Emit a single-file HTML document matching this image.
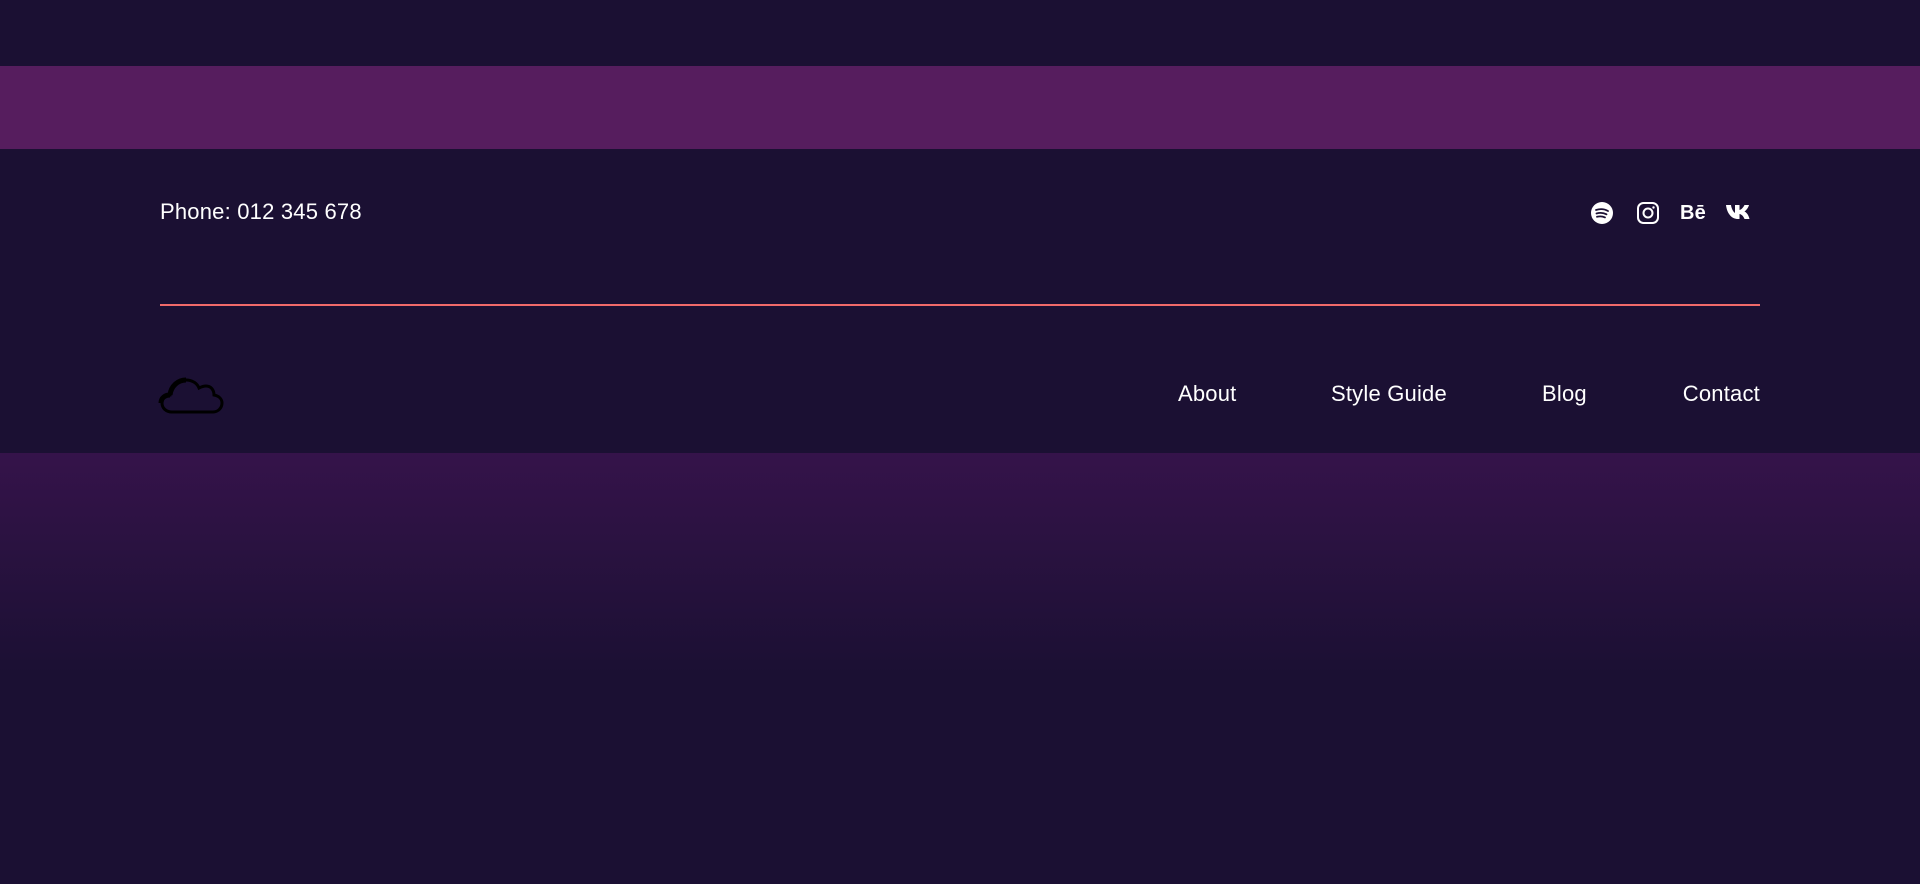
<!DOCTYPE html>
<html><head><style>
body{margin:0;width:1920px;height:884px;background:#1b1033;font-family:"Liberation Sans",sans-serif;overflow:hidden;position:relative}
.band{position:absolute;top:66px;left:0;width:1920px;height:83px;background:#561d5e}
.grad{position:absolute;top:453px;left:0;width:1920px;height:220px;background:linear-gradient(#35134a,#1b1033)}
.t{position:absolute;color:#fff;font-size:22px;line-height:26px;white-space:nowrap;letter-spacing:0.2px}
.line{position:absolute;left:160px;top:304px;width:1600px;height:2px;background:#f06a6a}
</style></head><body>
<div class="band"></div>
<div class="t" style="left:160px;top:199px">Phone: 012 345 678</div>
<svg style="position:absolute;left:1590px;top:201px" width="24" height="24" viewBox="0 0 24 24"><circle cx="12" cy="12" r="11" fill="#fff"/><path d="M6 9c4-1.3 8.5-1 12 1M6.5 12.5c3.5-1 7-0.7 10 0.8M7 15.8c3-0.8 5.5-0.5 8 0.6" stroke="#1b1033" stroke-width="1.8" fill="none" stroke-linecap="round"/></svg>
<svg style="position:absolute;left:1636px;top:201px" width="24" height="24" viewBox="0 0 24 24"><rect x="2" y="2" width="20" height="20" rx="5.5" stroke="#fff" stroke-width="2" fill="none"/><circle cx="12" cy="12" r="4.5" stroke="#fff" stroke-width="2" fill="none"/><circle cx="17.5" cy="6.5" r="1.2" fill="#fff"/></svg>
<div class="t" style="left:1680px;top:200px;font-weight:bold;font-size:20px">Bē</div>
<svg style="position:absolute;left:1726px;top:204px" width="25" height="16" viewBox="0 0 25 16"><path d="M0 1h5c0.5 4 2.5 7 4 8V1h4.5v5c2-0.3 4-3 5-5h4.5c-0.8 3-3 5.5-4.5 6.5 1.5 0.7 4 2.8 5 7.5h-5c-1-2.8-3-4.7-5-5v5h-1.5C6 15 1 10 0 1z" fill="#fff"/></svg>
<div class="line"></div>
<svg style="position:absolute;left:158px;top:374px" width="68" height="42" viewBox="0 0 68 42"><path d="M14 38C8 38 4 34 4 29c0-5 4-8 8-8 1-9 8-15 16-15 6 0 11 3 13 8 2-1 4-2 7-2 5 0 8 4 8 9 5 1 8 4 8 8 0 5-4 9-9 9z" stroke="#000" stroke-width="3" fill="none"/><path d="M12 21c-5 0-9 3-9 8M28 6c-8 0-15 6-16 15" stroke="#000" stroke-width="5" fill="none"/></svg>
<div class="t" style="left:1178px;top:381px">About</div>
<div class="t" style="left:1331px;top:381px">Style Guide</div>
<div class="t" style="left:1542px;top:381px">Blog</div>
<div class="t" style="right:160px;top:381px">Contact</div>
<div class="grad"></div>
</body></html>
